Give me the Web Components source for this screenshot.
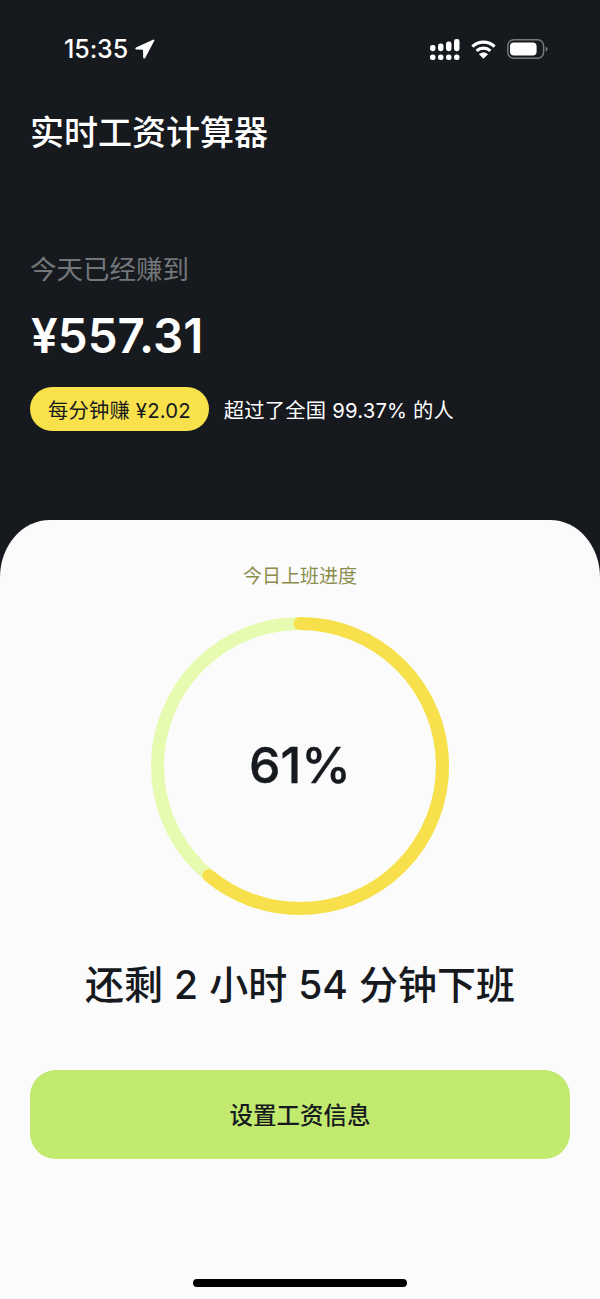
<!DOCTYPE html>
<html lang="zh-CN">
    <head>
        <meta charset="UTF-8" />
        <meta name="viewport" content="width=device-width, initial-scale=1.0" />
        <title>实时工资计算器</title>
        <style>
            html,
            body {
                margin: 0;
                height: 1299px;
                overflow: hidden;
                background: #16191d;
                font-family: Inter, 'Noto Sans CJK SC', sans-serif;
            }
        </style>
    </head>
    <body>
        <salary-app>
            <status-bar slot="top" time="15:35"></status-bar>
            <earnings-panel
                slot="top"
                title="实时工资计算器"
                label="今天已经赚到"
                amount="¥557.31"
                rate="每分钟赚 ¥2.02"
                rank="超过了全国 99.37% 的人"
            ></earnings-panel>
            <progress-sheet
                slot="sheet"
                label="今日上班进度"
                percent="61"
                remain="还剩 2 小时 54 分钟下班"
                action="设置工资信息"
            ></progress-sheet>
        </salary-app>

        <script type="module">
            class SalaryApp extends HTMLElement {
                constructor() {
                    super();
                    this.attachShadow({ mode: 'open' });
                    this.shadowRoot.innerHTML = `
                        <style>
                            :host {
                                display: grid;
                                grid-template-rows: 520px 779px;
                                height: 1299px;
                                background: #16191d;
                            }
                            .top {
                                display: flex;
                                flex-direction: column;
                            }
                        </style>
                        <div class="top"><slot name="top"></slot></div>
                        <slot name="sheet"></slot>
                    `;
                }
            }

            class StatusBar extends HTMLElement {
                constructor() {
                    super();
                    this.attachShadow({ mode: 'open' });
                    this.shadowRoot.innerHTML = `
                        <style>
                            :host {
                                display: flex;
                                align-items: center;
                                height: 20px;
                                padding: 39px 52px 0 64px;
                                color: #fff;
                            }
                            .time {
                                font-size: 25px;
                                font-weight: 500;
                                line-height: 20px;
                                letter-spacing: -0.1px;
                            }
                            .arrow {
                                margin-left: 7px;
                            }
                            .icons {
                                display: flex;
                                align-items: center;
                                gap: 11px;
                                margin-left: auto;
                            }
                            svg {
                                display: block;
                            }
                        </style>
                        <span class="time">${this.getAttribute('time')}</span>
                        <svg class="arrow" width="20" height="20" viewBox="0 0 20 20">
                            <path fill="#fff" d="M18.6.4 1 8.6c-1 .5-.8 1.9.4 1.9l6.6.2.2 7.8c0 1.1 1.5 1.4 2 .4l9.2-17.4c.3-.6-.2-1-.8-1.1z" />
                        </svg>
                        <div class="icons">
                            <svg width="30" height="21" viewBox="0 0 30 21" fill="#fff">
                                <rect x="0" y="15.4" width="5.5" height="5.6" rx="2.5" />
                                <rect x="8" y="15.4" width="5.5" height="5.6" rx="2.5" />
                                <rect x="16" y="15.4" width="5.5" height="5.6" rx="2.5" />
                                <rect x="24" y="15.4" width="5.5" height="5.6" rx="2.5" />
                                <rect x="0" y="6" width="5.5" height="6.2" rx="2.4" />
                                <rect x="8" y="4.6" width="5.5" height="7.6" rx="2.4" />
                                <rect x="16" y="2.6" width="5.5" height="9.6" rx="2.4" />
                                <rect x="24" y="0" width="5.5" height="12.2" rx="2.4" />
                            </svg>
                            <svg width="25" height="19" viewBox="0 0 25 19" fill="none" stroke="#fff" stroke-width="3.2">
                                <path d="M1.4 6.6C7.6 .7 17.4 .7 23.6 6.6" />
                                <path d="M5.6 10.9c3.9-3.6 9.9-3.6 13.8 0" />
                                <path fill="#fff" stroke="none" d="M12.5 18.8 8 14.2c2.6-2.2 6.4-2.2 9 0z" />
                            </svg>
                            <svg width="41" height="20" viewBox="0 0 41 20">
                                <rect x=".8" y=".8" width="35.8" height="18.4" rx="6" fill="none" stroke="#77797b" stroke-width="1.5" />
                                <rect x="3" y="3.4" width="26.6" height="13.2" rx="4" fill="#fff" />
                                <path d="M38.6 7.4c1.2.4 2 1.4 2 2.6s-.8 2.2-2 2.6z" fill="#77797b" />
                            </svg>
                        </div>
                    `;
                }
            }

            class EarningsPanel extends HTMLElement {
                constructor() {
                    super();
                    this.attachShadow({ mode: 'open' });
                    this.shadowRoot.innerHTML = `
                        <style>
                            :host {
                                display: flex;
                                flex-direction: column;
                                align-items: flex-start;
                                padding: 50px 30px 0 30px;
                                color: #fff;
                            }
                            h1 {
                                margin: 0;
                                font-size: 34px;
                                line-height: 48px;
                                font-weight: 500;
                            }
                            .label {
                                margin-top: 92px;
                                font-size: 26.5px;
                                line-height: 40px;
                                color: #74777a;
                            }
                            .amount {
                                margin-top: 21px;
                                margin-left: 1px;
                                font-size: 47.5px;
                                line-height: 52px;
                                font-weight: 600;
                            }
                            .row {
                                display: flex;
                                align-items: center;
                                gap: 15px;
                                margin-top: 25px;
                                font-size: 20.3px;
                                letter-spacing: 0.2px;
                            }
                            .pill {
                                display: flex;
                                align-items: center;
                                height: 44px;
                                padding: 0 18px;
                                border-radius: 22px;
                                background: #f9e14b;
                                color: #16191d;
                            }
                        </style>
                        <h1>${this.getAttribute('title')}</h1>
                        <div class="label">${this.getAttribute('label')}</div>
                        <div class="amount">${this.getAttribute('amount')}</div>
                        <div class="row">
                            <span class="pill">${this.getAttribute('rate')}</span>
                            <span>${this.getAttribute('rank')}</span>
                        </div>
                    `;
                }
            }

            class ProgressRing extends HTMLElement {
                constructor() {
                    super();
                    this.attachShadow({ mode: 'open' });
                    const r = 142.5;
                    const length = 2 * Math.PI * r;
                    const done = (length * this.getAttribute('percent')) / 100;
                    this.shadowRoot.innerHTML = `
                        <style>
                            :host {
                                display: grid;
                                place-items: center;
                                width: 298px;
                                height: 298px;
                            }
                            svg,
                            span {
                                grid-area: 1 / 1;
                            }
                            span {
                                padding-bottom: 3px;
                                font-size: 50px;
                                font-weight: 500;
                                color: #16191d;
                                -webkit-text-stroke: 0.4px #16191d;
                            }
                        </style>
                        <svg width="298" height="298" viewBox="0 0 298 298" fill="none" stroke-width="13">
                            <circle cx="149" cy="149" r="${r}" stroke="#e6fbaf" />
                            <circle
                                cx="149"
                                cy="149"
                                r="${r}"
                                stroke="#f8e04d"
                                stroke-linecap="round"
                                stroke-dasharray="${done} ${length}"
                                transform="rotate(-90 149 149)"
                            />
                        </svg>
                        <span>${this.getAttribute('percent')}%</span>
                    `;
                }
            }

            class ProgressSheet extends HTMLElement {
                constructor() {
                    super();
                    this.attachShadow({ mode: 'open' });
                    this.shadowRoot.innerHTML = `
                        <style>
                            :host {
                                display: flex;
                                flex-direction: column;
                                align-items: center;
                                padding: 0 30px;
                                border-radius: 50px 50px 0 0 / 57px 57px 0 0;
                                background: #fbfbfb;
                                color: #16191d;
                            }
                            .label {
                                margin-top: 43px;
                                font-size: 19px;
                                line-height: 28px;
                                color: #8b8c4c;
                            }
                            progress-ring {
                                margin-top: 26px;
                            }
                            .remain {
                                margin-top: 42px;
                                font-size: 39px;
                                line-height: 56px;
                                font-weight: 500;
                                word-spacing: 0.7px;
                                white-space: nowrap;
                            }
                            button {
                                width: 100%;
                                height: 89px;
                                margin-top: 57px;
                                padding: 0 0 2px;
                                border: 0;
                                border-radius: 26px;
                                background: #c1ea6e;
                                color: #16191d;
                                font: 500 23.5px Inter, 'Noto Sans CJK SC', sans-serif;
                            }
                            .home {
                                width: 214px;
                                height: 8px;
                                margin-top: 120px;
                                border-radius: 4px;
                                background: #000;
                            }
                        </style>
                        <div class="label">${this.getAttribute('label')}</div>
                        <progress-ring percent="${this.getAttribute('percent')}"></progress-ring>
                        <div class="remain">${this.getAttribute('remain')}</div>
                        <button>${this.getAttribute('action')}</button>
                        <div class="home"></div>
                    `;
                }
            }

            window.customElements.define('progress-ring', ProgressRing);
            window.customElements.define('status-bar', StatusBar);
            window.customElements.define('earnings-panel', EarningsPanel);
            window.customElements.define('progress-sheet', ProgressSheet);
            window.customElements.define('salary-app', SalaryApp);
        </script>
    </body>
</html>
